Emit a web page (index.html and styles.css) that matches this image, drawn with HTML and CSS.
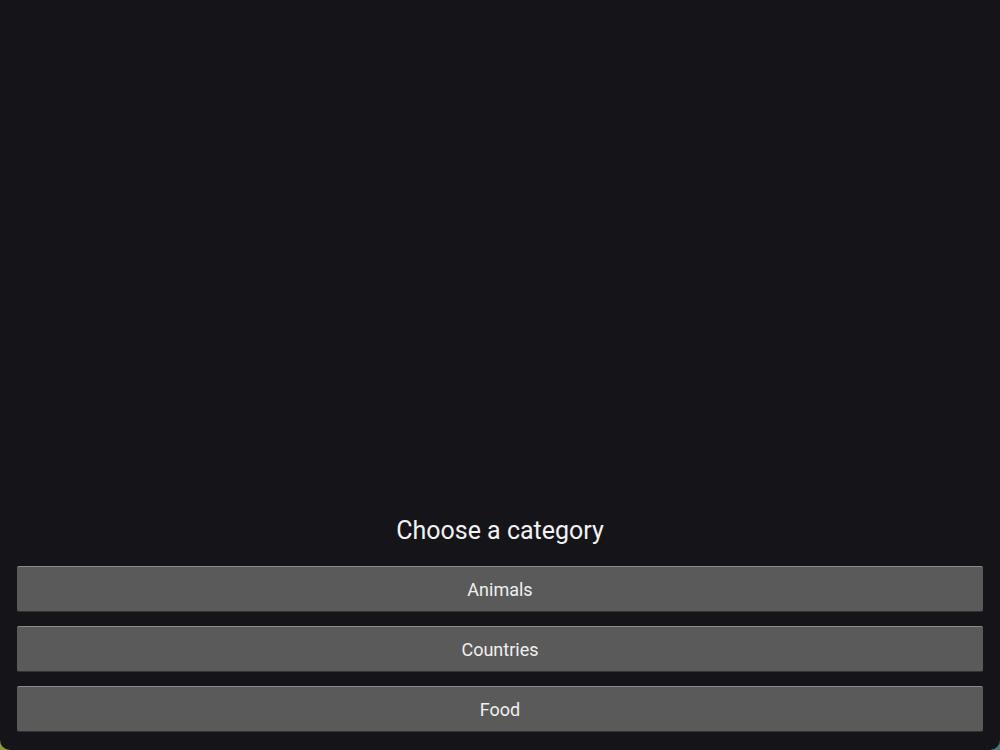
FILE: index.html
```html
<!DOCTYPE html>
<html lang="en">
<head>
<meta charset="utf-8">
<title>Choose a category</title>
<link rel="stylesheet" href="styles.css">
</head>
<body>
<main class="screen">
  <h1 class="title">Choose a category</h1>
  <div class="choices">
    <button class="choice">Animals</button>
    <button class="choice">Countries</button>
    <button class="choice">Food</button>
  </div>
</main>
</body>
</html>
```
FILE: styles.css
```css
html {
  height: 100%;
  background: linear-gradient(to right, #8a9a3a, #4a7a78);
}
body {
  margin: 0;
  height: 100%;
  font-family: Roboto, "Liberation Sans", sans-serif;
}
.screen {
  box-sizing: border-box;
  height: 100%;
  background: #151419;
  border-radius: 0 0 10px 10px;
  display: flex;
  flex-direction: column;
  justify-content: flex-end;
  padding: 0 17px 18px;
}
.title {
  margin: 0 0 20px;
  text-align: center;
  color: #f2f2f2;
  font-size: 25px;
  font-weight: 400;
  line-height: 30px;
}
.choices {
  display: flex;
  flex-direction: column;
  gap: 14px;
}
.choice {
  height: 46px;
  margin: 0;
  padding: 0;
  background: #5a5a5a;
  color: #f0f0f0;
  font-family: Roboto, "Liberation Sans", sans-serif;
  font-size: 18px;
  border: 0;
  border-top: 1px solid #8c8c8c;
  border-bottom: 1px solid #343434;
  border-radius: 2px;
}
```
